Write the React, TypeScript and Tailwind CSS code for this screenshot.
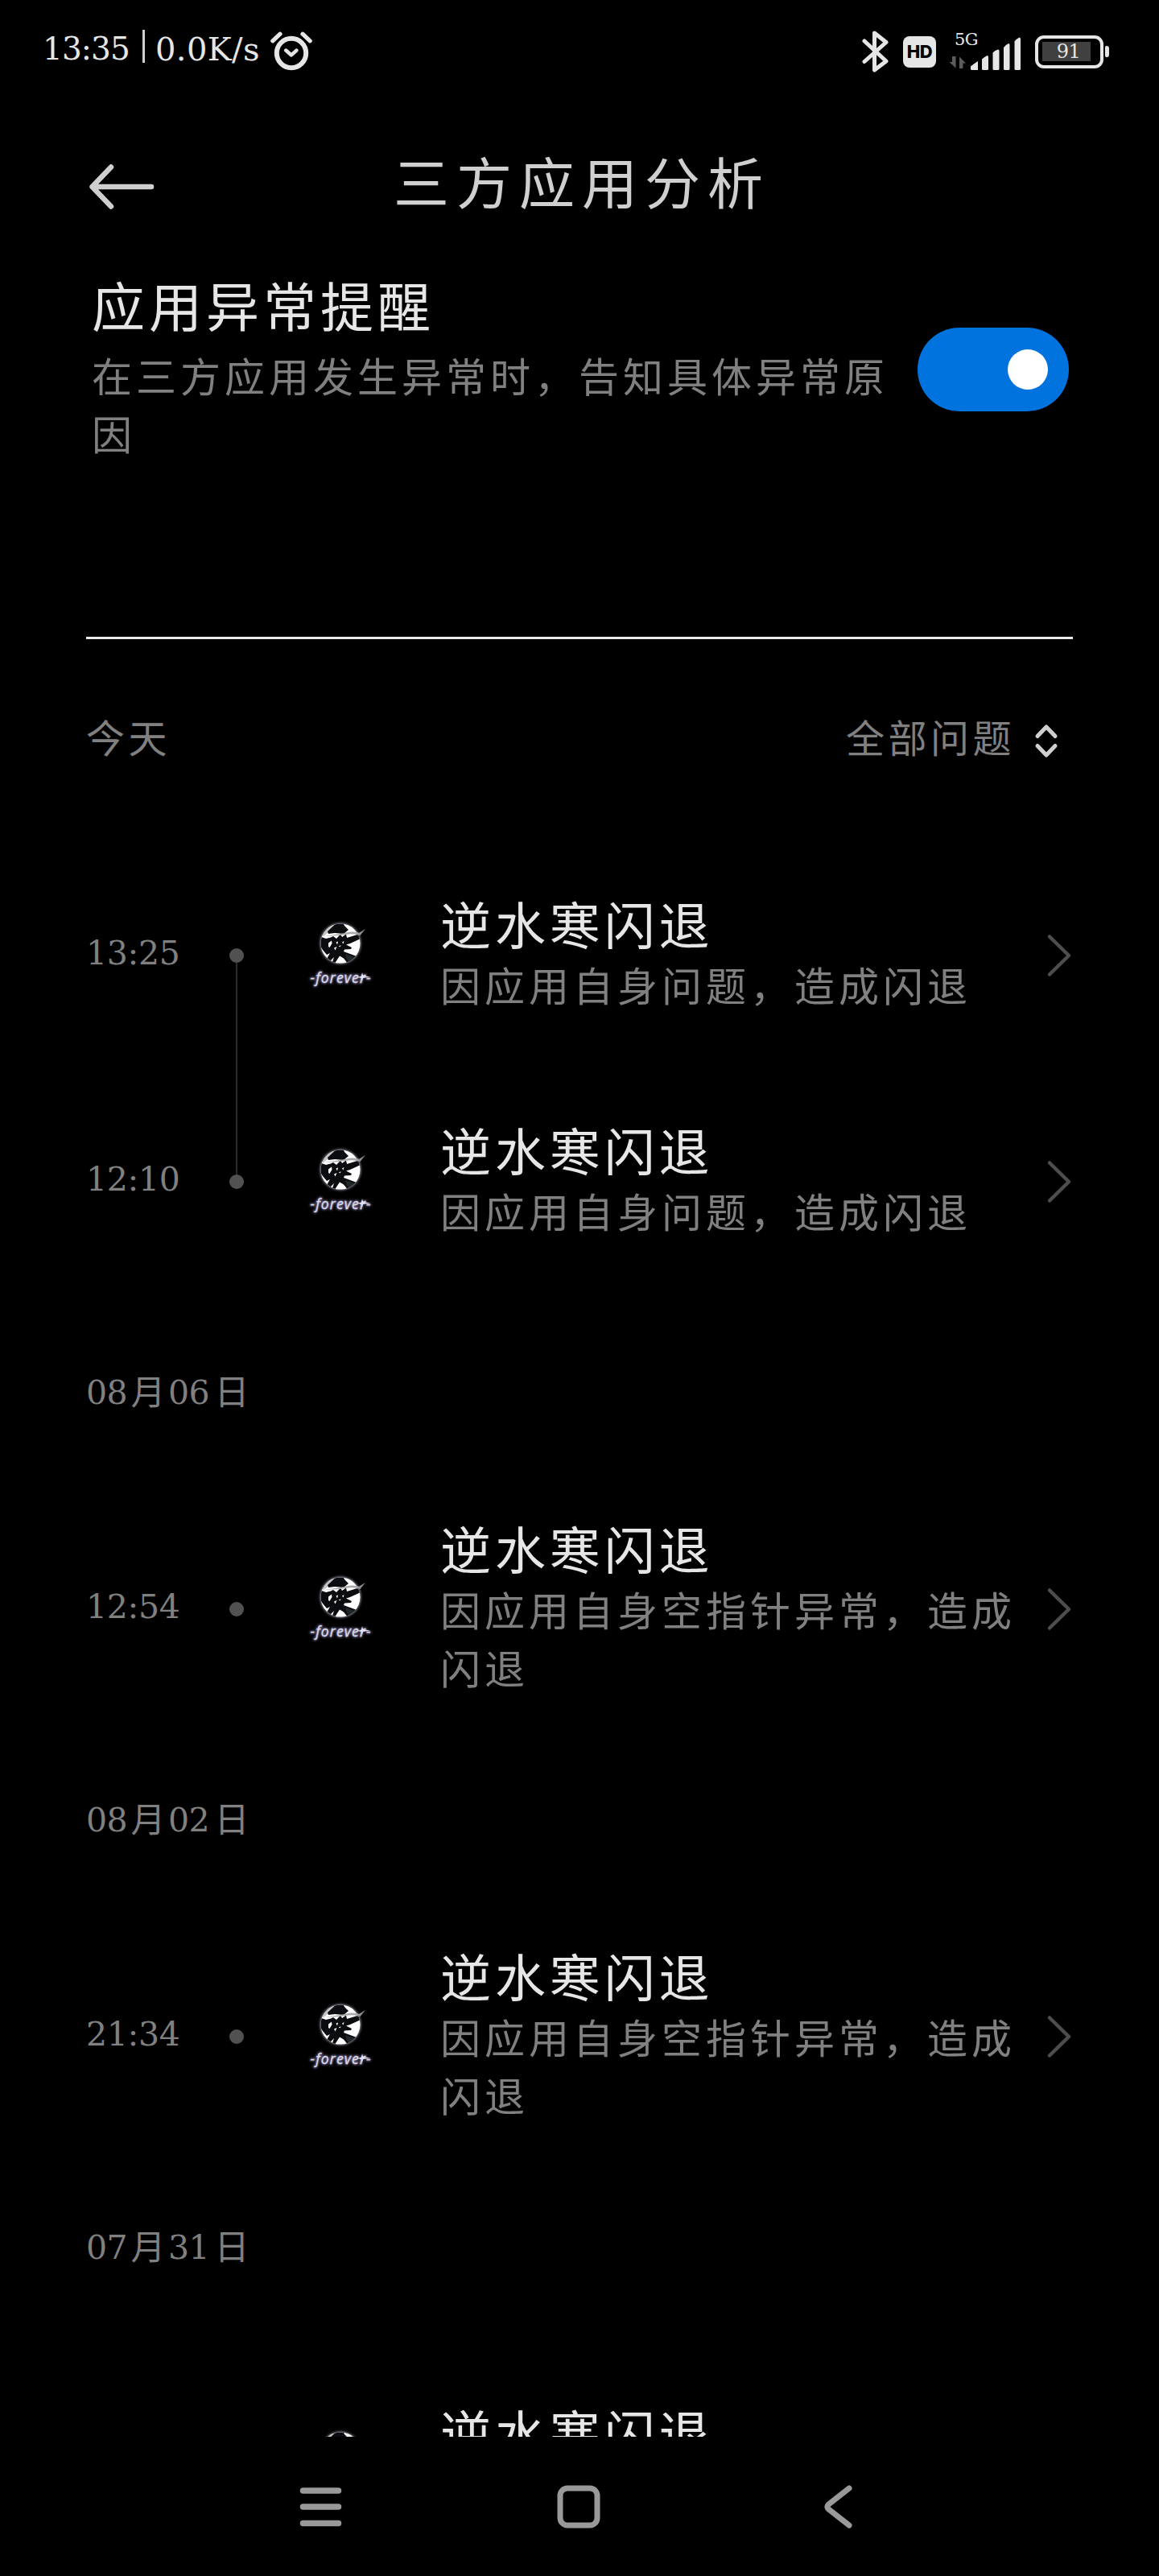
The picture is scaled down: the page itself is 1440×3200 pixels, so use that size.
import React from "react";

const DIGITS = "font-['DejaVu_Serif','Noto_Sans_CJK_SC',serif]";

function AlarmIcon() {
  return (
    <svg width="52" height="50" viewBox="0 0 52 50" fill="none" stroke="#e6e6e6" strokeLinecap="round" strokeLinejoin="round">
      <circle cx="26" cy="27" r="18.2" strokeWidth="6" />
      <path d="M2.8 11.8 12 3.2M49.2 11.8 40 3.2" strokeWidth="5.2" />
      <path d="M19.2 23.6 26 29.4 32.4 23.6" strokeWidth="4.6" />
    </svg>
  );
}

function BluetoothIcon() {
  return (
    <svg width="34" height="52" viewBox="0 0 34 52" fill="none" stroke="#e6e6e6" strokeWidth="5" strokeLinecap="round" strokeLinejoin="round">
      <path d="M3 13 30 38 15.5 49V3L30 14.5 3 38.5" />
    </svg>
  );
}

function SignalIcon() {
  return (
    <svg width="90" height="48" viewBox="0 0 90 48">
      <g fill="#5c5c5c">
        <path d="M8.500 31v14.500l-8-7.500h3.500v-7zM13 46V31.500l8 8h-3.600V46z" />
      </g>
      <g fill="#e6e6e6">
        <path d="M27 43.500q5-4 9-6.500v11h-7.500q-1.500 0-1.500-1.500z" />
        <path d="M41 34.500q3-3 6.500-4.500 1.500 0 1.500 2v14.500q0 1.500-1.500 1.500h-5q-1.500 0-1.500-1.500z" />
        <path d="M54.500 26.500q2.500-3 6.500-4 1.500 0 1.500 2v22q0 1.500-1.500 1.500h-5q-1.500 0-1.500-1.500z" />
        <path d="M68 20q2-3 6-5 1.500 0 1.500 2v29.500q0 1.500-1.500 1.500h-4.500q-1.500 0-1.500-1.500z" />
        <path d="M81.500 12.500q2-3 6-5 1.500 0 1.500 2v37q0 1.500-1.500 1.500h-4.500q-1.500 0-1.500-1.500z" />
      </g>
    </svg>
  );
}

function StatusBar() {
  return (
    <header className={`flex h-[128px] items-start justify-between pl-[53px] pr-[62px] text-[#e6e6e6] ${DIGITS}`}>
      <div className="flex h-[122px] items-center">
        <span className="w-[110px] whitespace-nowrap text-[39px] tracking-[-0.9px]">13:35</span>
        <i className="ml-[14px] mb-[7px] h-[41px] w-[3px] bg-[#cfcfcf]" />
        <span className="ml-[13px] w-[134px] whitespace-nowrap text-[40px] tracking-[0.4px]">0.0K/s</span>
        <span className="ml-[9px] mt-[6px]"><AlarmIcon /></span>
      </div>
      <div className="flex h-[128px] items-center">
        <BluetoothIcon />
        <span className="ml-[17px] flex h-[39px] w-[41px] items-center justify-center rounded-[8px] bg-[#e6e6e6] font-['Inter'] text-[22px] font-extrabold tracking-[-0.5px] text-black">HD</span>
        <span className="relative ml-[16px] mb-[3px] block h-[48px]">
          <SignalIcon />
          <span className="absolute left-[7px] top-[-4px] text-[21px] leading-[28px] tracking-[-0.5px]">5G</span>
        </span>
        <span className="ml-[17px] flex h-[41px] w-[85px] items-center rounded-[11px] border-4 border-[#e6e6e6] px-[5px]">
          <span className="flex h-[24px] w-[60px] items-center justify-center bg-[#404040] pl-[5px] text-[24px] tracking-[-0.5px]">91</span>
        </span>
        <i className="ml-[2px] h-[14px] w-[5px] rounded-r-[4px] rounded-l-[2px] bg-[#e6e6e6]" />
      </div>
    </header>
  );
}

function GameIcon({ caption = true }: { caption?: boolean }) {
  return (
    <svg width="90" height="84" viewBox="0 0 90 84" className="overflow-visible">
      <defs>
        <clipPath id="disc"><circle cx="45" cy="28" r="24.500" /></clipPath>
        <filter id="glow" x="-30%" y="-30%" width="160%" height="160%"><feGaussianBlur stdDeviation="1.5" /></filter>
      </defs>
      <circle cx="45" cy="28" r="25.500" fill="#8a8899" filter="url(#glow)" />
      <circle cx="45" cy="28" r="24.500" fill="#fff" />
      <g clipPath="url(#disc)">
        <path d="M20 19 33 4 39 6 29 15 24 19z" fill="#c4c4c4" />
        <path d="M29 13 37 5.500 40 2H48L50 6 55 11 49 16 38 15 30 16z" fill="#0b0c10" />
        <path d="M19 19 27 22 33 20.500 36 19 40 22 45 16.500 47 20 52 16.500 53 21 66 17 70 19 69 22.500 57 28 52 29.500 59 33 58 35 50 35.500 49 38 68 45 60 54 55 54 49 46.500 44 43.500 41 48 38 53 35 51 37 45 32 50 28 47 32 40 28 42 23 36 19 30z" fill="#0b0c10" />
        <path d="M30 27.500 34 24.500 34.500 28 31.500 33 30 32zM39.500 26.500l2.500-1-1 4zM37 33.500l3.500-1.500-2 4.500zM47 26.500l2.500-1.500-1 3.500zM43 31l3-.5-2 2z" fill="#fff" />
        <path d="M46 45.500l2 6M41 50l-1 4" stroke="#fff" strokeWidth="2.200" />
        <path d="M51 41 66 46 59 52 53 48z" fill="#20272b" />
      </g>
      <path d="M25 18.500Q42 17 52 14.500T70 15.500L67 17.500Q60 15.500 51 17T25 18.500z" fill="#aaa" />
      <path d="M66 16 76 10 69 18.500z" fill="#8f8f98" />
      {caption && (
        <>
          <g fontFamily="Open Sans" fontSize="17.500" fontStyle="italic" textAnchor="middle">
            <text x="45" y="77" textLength="75" fill="#6f6a92" stroke="#6f6a92" strokeWidth="2" filter="url(#glow)">-forever-</text>
            <text x="45" y="77" textLength="75" fill="#dcdae6" stroke="#dcdae6" strokeWidth="0.300">-forever-</text>
          </g>
          <path d="M72 64 73 68 82 69.500 73 71 72 75 71 71 66 70 71 68.500z" fill="#e6e2f4" />
        </>
      )}
    </svg>
  );
}

type Issue = { time?: string; detail?: string; line?: "down" | "up"; caption?: boolean };

function IssueRow({ time, detail, line, caption }: Issue) {
  return (
    <li className="flex h-[281px] shrink-0 items-center">
      <time className={`mb-[6px] w-[132px] shrink-0 whitespace-nowrap text-[41px] leading-[50px] tracking-[-0.300px] text-[#808080] ${DIGITS}`}>{time}</time>
      <div className="flex h-full w-[110px] shrink-0 flex-col items-center">
        <i className={`w-[2px] flex-1 ${line === "up" ? "bg-[#2b2b2b]" : ""}`} />
        <i className="size-[18px] rounded-full bg-[#515151]" />
        <i className={`w-[2px] flex-1 ${line === "down" ? "bg-[#2b2b2b]" : ""}`} />
      </div>
      <div className="ml-[29px] mb-[2px] w-[90px] shrink-0"><GameIcon caption={caption} /></div>
      <div className="ml-[79px] w-[720px] shrink-0 pb-[9px]">
        <h3 className="text-[63px] leading-[78px] tracking-[4.900px] text-[#e6e6e6]">逆水寒闪退</h3>
        <p className="mt-px min-h-[72px] text-[50px] leading-[72px] tracking-[5px] text-[#808080]">{detail}</p>
      </div>
      <svg width="32" height="56" viewBox="0 0 32 56" className="ml-[33px] shrink-0" fill="none" stroke="#4d4d4d" strokeWidth="4.500" strokeLinecap="round" strokeLinejoin="round">
        <path d="M4 4.500 28 28 4 51.500" />
      </svg>
    </li>
  );
}

function DateLabel({ month, day }: { month: string; day: string }) {
  return (
    <h2 className={`flex h-[250px] shrink-0 items-center pb-[4px] text-[#808080] ${DIGITS}`}>
      <span className="w-[52px] whitespace-nowrap text-[41px] tracking-[-0.500px]">{month}</span>
      <span className="w-[50px] pb-[2px] text-center text-[43px]">月</span>
      <span className="w-[52px] whitespace-nowrap text-[41px] tracking-[-0.500px]">{day}</span>
      <span className="w-[54px] pb-[2px] text-center text-[43px]">日</span>
    </h2>
  );
}

const SELF = "因应用自身问题，造成闪退";
const NULL_POINTER = "因应用自身空指针异常，造成闪退";

export default function App() {
  return (
    <div className="flex h-[3200px] w-[1440px] flex-col overflow-hidden bg-black font-['Noto_Sans_CJK_SC',sans-serif]">
      <StatusBar />
      <div className="flex h-[200px] shrink-0 items-center px-[110px]">
        <svg width="82" height="58" viewBox="0 0 82 58" className="mt-[8px]" fill="none" stroke="#cfcfcf" strokeWidth="6.500" strokeLinecap="round" strokeLinejoin="round">
          <path d="M28 4.500 4.500 29 28 53.500M5 29H78" />
        </svg>
        <h1 className="mb-[8px] ml-[297px] text-[69px] leading-[90px] tracking-[9px] text-[#cfcfcf]">三方应用分析</h1>
      </div>

      <section className="mx-[107px] flex h-[466px] shrink-0 items-start border-b-[3px] border-[#ebebeb] pl-[7px] pr-[5px]">
        <div className="w-[1010px]">
          <h2 className="text-[66px] leading-[98px] tracking-[5px] text-[#e6e6e6]">应用异常提醒</h2>
          <p className="mt-[3px] text-[50px] leading-[72px] tracking-[5px] text-[#808080]">在三方应用发生异常时，告知具体异常原因</p>
        </div>
        <button role="switch" aria-checked="true" className="ml-auto mt-[79px] flex h-[104px] w-[188px] items-center justify-end rounded-full bg-[#0073df] pr-[26px]">
          <i className="size-[50px] rounded-full bg-white" />
        </button>
      </section>

      <main className="flex min-h-0 flex-1 flex-col overflow-hidden pl-[107px] pr-[107px]">
        <div className="flex h-[252px] shrink-0 items-center justify-between pb-[12px] text-[48px] tracking-[4.500px] text-[#808080]">
          <h2>今天</h2>
          <button className="flex items-center">
            全部问题
            <svg width="34" height="44" viewBox="0 0 34 44" className="ml-[22px] mr-[16px] mt-[11px]" fill="none" stroke="#cfcfcf" strokeWidth="5" strokeLinecap="round" strokeLinejoin="round">
              <path d="M6 16.500 17 5 28 16.500M6 28.500 17 40 28 28.500" />
            </svg>
          </button>
        </div>
        <ul className="shrink-0">
          <IssueRow time="13:25" detail={SELF} line="down" />
          <IssueRow time="12:10" detail={SELF} line="up" />
        </ul>
        <DateLabel month="08" day="06" />
        <ul className="shrink-0"><IssueRow time="12:54" detail={NULL_POINTER} /></ul>
        <DateLabel month="08" day="02" />
        <ul className="shrink-0"><IssueRow time="21:34" detail={NULL_POINTER} /></ul>
        <DateLabel month="07" day="31" />
        <ul className="shrink-0"><IssueRow caption={false} /></ul>
      </main>

      <nav className="flex h-[173px] shrink-0 items-center pl-[371px]">
        <svg width="56" height="56" viewBox="0 0 56 56" stroke="#999" strokeWidth="7.500" strokeLinecap="round">
          <path d="M5.500 8H49.500M5.500 28H49.500M5.500 48.500H49.500" />
        </svg>
        <svg width="56" height="56" viewBox="0 0 56 56" className="ml-[264px]" fill="none" stroke="#999" strokeWidth="7">
          <rect x="5" y="5" width="46" height="46" rx="9" />
        </svg>
        <svg width="38" height="56" viewBox="0 0 38 56" className="ml-[275px]" fill="none" stroke="#999" strokeWidth="7" strokeLinecap="round" strokeLinejoin="round">
          <path d="M33 5 7.500 25Q4.500 28 7.500 31L33 51" />
        </svg>
      </nav>
    </div>
  );
}
